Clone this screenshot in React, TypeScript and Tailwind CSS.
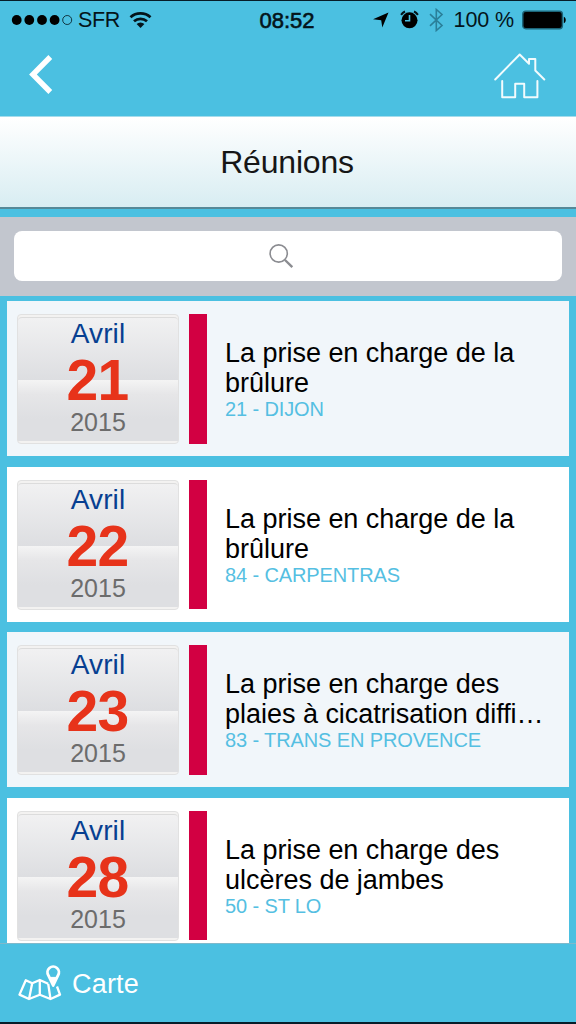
interface Meeting {
  id: number;
  month: string;
  day: string;
  year: string;
  title: string;
  place: string;
}

const meetings: Meeting[] = [
  { id: 1, month: 'Avril', day: '21', year: '2015', title: 'La prise en charge de la brûlure', place: '21 - DIJON' },
  { id: 2, month: 'Avril', day: '22', year: '2015', title: 'La prise en charge de la brûlure', place: '84 - CARPENTRAS' },
  { id: 3, month: 'Avril', day: '23', year: '2015', title: 'La prise en charge des plaies à cicatrisation diffi…', place: '83 - TRANS EN PROVENCE' },
  { id: 4, month: 'Avril', day: '28', year: '2015', title: 'La prise en charge des ulcères de jambes', place: '50 - ST LO' },
];

function StatusBar() {
  return (
    <div className="grid h-[38px] grid-cols-[1fr_auto_1fr] items-center text-[21px] leading-none text-[#04141a]">
      {/* Carrier */}
      <div className="flex items-center pl-[11px]">
        <svg className="-mt-px" width="62" height="12" viewBox="0 0 62 12">
          <circle cx="5.7" cy="6" r="4.9" />
          <circle cx="18.3" cy="6" r="4.9" />
          <circle cx="31" cy="6" r="4.9" />
          <circle cx="43.6" cy="6" r="4.9" />
          <circle cx="56.2" cy="6" r="4.5" fill="none" stroke="#04141a" strokeWidth="0.8" />
        </svg>
        <span className="ml-[5px] mt-px text-[21.5px] tracking-[-0.3px]">SFR</span>
        <svg className="ml-[9px] -mt-px" width="24" height="18" viewBox="0 0 24 18" fill="none" stroke="#04141a" strokeWidth="2.8">
          <path d="M1.5 6.2a15 15 0 0 1 20 0" />
          <path d="M5 10.2a10 10 0 0 1 13 0" />
          <path d="M7.6 13a5.8 5.8 0 0 1 7.8 0L11.5 17Z" fill="#04141a" stroke="none" />
        </svg>
      </div>

      <span className="-ml-[2px] mt-px text-[22px] [-webkit-text-stroke:0.6px_#04141a]">08:52</span>

      {/* Indicators */}
      <div className="flex items-center justify-end pr-[10px]">
        <svg className="-mt-px" width="16" height="16" viewBox="0 0 16 16">
          <path d="M15.5 .5 9.3 15.5 8.2 8.2 0 7.2Z" />
        </svg>
        <svg className="ml-[11px] -mt-[2px]" width="19" height="19" viewBox="0 0 19 19">
          <circle cx="9.5" cy="10.3" r="8" />
          <path d="M1.1 4.9A9 9 0 0 1 5 1.5M14 1.5a9 9 0 0 1 3.9 3.4" fill="none" stroke="#04141a" strokeWidth="2" />
          <path d="M9.5 5v5.7H5" fill="none" stroke="#4bc0e1" strokeWidth="1.6" />
        </svg>
        <svg className="ml-[10px] -mt-px" width="15" height="24" viewBox="0 0 15 24" fill="none" stroke="#2a7f99" strokeWidth="1.6">
          <path d="M1 6.2 13 17.5 7.3 22.5V1.5L13 6.5 1 17.8" />
        </svg>
        <span className="ml-[10px] mt-px text-[21.5px] tracking-[-0.1px]">100 %</span>
        <svg className="ml-2 -mt-px" width="44" height="20" viewBox="0 0 44 20">
          <rect x=".8" y="1.3" width="39.6" height="17.4" rx="3" fill="#000" stroke="#1c6478" strokeWidth="1.4" />
          <path d="M41.8 6.8c2.6.6 2.6 5.8 0 6.4Z" />
        </svg>
      </div>
    </div>
  );
}

function NavBar() {
  return (
    <div className="flex h-[77px] items-start justify-between pl-[29px] pr-[30px]">
      <button className="mt-[16px]">
        <svg width="24" height="39" viewBox="0 0 24 39" fill="none" stroke="#fff" strokeWidth="5.4">
          <path d="M21.3 2 3.9 19.5 21.3 37" />
        </svg>
      </button>
      <button className="mt-[14px]">
        <svg width="52" height="46" viewBox="0 0 52 46" fill="none" stroke="#f2fbfd" strokeWidth="2" strokeLinecap="round" strokeLinejoin="round">
          <path d="M1.2 26.5 25.7 1.5 35 10.8V6h6.3v11.5l9 9" />
          <path d="M8.2 28v16.2h13V30.8h9v13.4h13.2V28" />
        </svg>
      </button>
    </div>
  );
}

function SearchBar() {
  return (
    <div className="h-[79px] bg-[#c2c6ce] px-[14px] pt-[14px]">
      <div className="flex h-[50px] items-center justify-center rounded-lg bg-white pl-[1px] pr-[15px]">
        <svg width="26" height="26" viewBox="0 0 26 26" fill="none" stroke="#8b8c91">
          <circle cx="10.7" cy="10.5" r="8.6" strokeWidth="1.6" />
          <path d="m17 17 7.3 7.2" strokeWidth="2.4" />
        </svg>
      </div>
    </div>
  );
}

function DateTile({ month, day, year }: Pick<Meeting, 'month' | 'day' | 'year'>) {
  return (
    <div className="flex h-[130px] w-[162px] shrink-0 flex-col rounded border border-[#e1e1e1] bg-[#f3f2f1] pt-[2px] pb-[2px]">
      <div className="flex flex-1 flex-col items-center rounded-t border-t border-[#dcdcdc] bg-[linear-gradient(to_bottom,#f1f1f2_0%,#dddee1_50%,#f4f4f4_50.5%,#e6e6e8_62%,#dedfe2_82%,#dedfe2_100%)]">
        <span className="text-[28px] leading-[32px] tracking-[0.1px] text-[#073f91]">{month}</span>
        <span className="-ml-[1px] text-[57px] font-bold leading-[60px] tracking-[-0.6px] text-[#e7331a]">{day}</span>
        <span className="-mt-[2px] text-[25px] leading-[28px] text-[#6c6c6c]">{year}</span>
      </div>
    </div>
  );
}

function MeetingCard({ meeting }: { meeting: Meeting }) {
  return (
    <div className="flex h-[155px] shrink-0 bg-white pl-[10px] pt-[13px] odd:bg-[#f1f6fa]">
      <DateTile month={meeting.month} day={meeting.day} year={meeting.year} />
      <div className="ml-[10px] h-[129.5px] w-[18px] shrink-0 bg-[#d20042]" />
      <div className="ml-[18px] h-[129.5px] w-[325px] pt-[24px]">
        <h3 className="text-[27px] leading-[30px] tracking-[-0.02px] text-black">{meeting.title}</h3>
        <p className="text-[20px] leading-[23px] tracking-[-0.12px] text-[#55bfe2]">{meeting.place}</p>
      </div>
    </div>
  );
}

export default function App() {
  return (
    <div className="flex h-[1024px] w-[576px] flex-col overflow-hidden border-t border-b-2 border-[#061d29] bg-[#4bc0e1] font-['Liberation_Sans',Arial,sans-serif]">
      <StatusBar />
      <NavBar />

      {/* Title */}
      <div className="flex h-[93px] shrink-0 items-center justify-center border-t border-b-2 border-t-[#a5dcec] border-b-[#568998] bg-linear-to-b from-white to-[#d8edf2]">
        <h1 className="-ml-[2px] text-[32px] leading-none tracking-[-0.2px] text-[#161616]">Réunions</h1>
      </div>

      <div className="mt-2 shrink-0">
        <SearchBar />
      </div>

      <div className="flex min-h-0 flex-1 flex-col gap-[10.5px] overflow-hidden px-[7px] pt-[5px]">
        {meetings.map((meeting) => (
          <MeetingCard key={meeting.id} meeting={meeting} />
        ))}
      </div>

      {/* Footer */}
      <div className="flex h-[79px] shrink-0 items-center border-t border-[#7fb9cb] pl-[18px] text-white">
        <svg width="44" height="36" viewBox="0 0 44 36" fill="none" stroke="#fff" strokeWidth="2.3" strokeLinejoin="round">
          <path d="M30.2 18.8 21.8 15 14.2 18.3 7.8 15.2 1.5 29.6 11 34 21.8 29.8 32.5 34 42 29.6 39 21.5" />
          <path d="M14.2 18.3 11 34M21.8 15v14.8M30.2 18.8 32.5 34" />
          {/* pin */}
          <path d="M35.2 20.5 30.4 10.4a5.7 5.7 0 1 1 9.6 0Z" strokeWidth="2.8" />
          <path d="m32.4 12.4 2.8 8.6 2.8-8.6Z" fill="#fff" strokeWidth="1" />
        </svg>
        <span className="ml-[10px] mt-[2px] text-[27px] leading-none tracking-[0.2px]">Carte</span>
      </div>
    </div>
  );
}
